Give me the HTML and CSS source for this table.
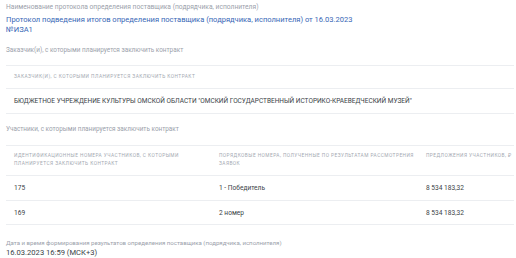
FILE: index.html
```html
<!DOCTYPE html>
<html lang="ru">
<head>
<meta charset="utf-8">
<link rel="stylesheet" href="styles.css">
</head>
<body>
<div class="page">
  <div class="label first">Наименование протокола определения поставщика (подрядчика, исполнителя)</div>
  <div class="title">Протокол подведения итогов определения поставщика (подрядчика, исполнителя) от 16.03.2023<br>№ИЗА1</div>

  <div class="label sec">Заказчик(и), с которыми планируется заключить контракт</div>
  <div class="table t1">
    <div class="row head"><div class="cell">Заказчик(и), с которыми планируется заключить контракт</div></div>
    <div class="row"><div class="cell">БЮДЖЕТНОЕ УЧРЕЖДЕНИЕ КУЛЬТУРЫ ОМСКОЙ ОБЛАСТИ "ОМСКИЙ ГОСУДАРСТВЕННЫЙ ИСТОРИКО-КРАЕВЕДЧЕСКИЙ МУЗЕЙ"</div></div>
  </div>

  <div class="label sec">Участники, с которыми планируется заключить контракт</div>
  <div class="table t2">
    <div class="row head grid3">
      <div class="cell">Идентификационные номера участников, с которыми планируется заключить контракт</div>
      <div class="cell">Порядковые номера, полученные по результатам рассмотрения заявок</div>
      <div class="cell">Предложения участников, ₽</div>
    </div>
    <div class="row grid3">
      <div class="cell">175</div>
      <div class="cell">1 - Победитель</div>
      <div class="cell">8 534 183,32</div>
    </div>
    <div class="row grid3">
      <div class="cell">169</div>
      <div class="cell">2 номер</div>
      <div class="cell">8 534 183,32</div>
    </div>
  </div>

  <div class="label date-label">Дата и время формирования результатов определения поставщика (подрядчика, исполнителя)</div>
  <div class="date">16.03.2023 16:59 (МСК+3)</div>
</div>
</body>
</html>
```
FILE: styles.css
```css
html, body {
  margin: 0;
  padding: 0;
  background: #ffffff;
}
body {
  font-family: Roboto, "Liberation Sans", sans-serif;
  color: #3a3f47;
}
.page {
  padding: 3px 2px 0 6px;
}
.label {
  font-size: 6.4px;
  line-height: 8px;
  color: #9ba1ab;
}
.label.first {
  font-size: 6.7px;
}
.title {
  margin-top: 4px;
  font-size: 7.55px;
  line-height: 10px;
  color: #3767b6;
}
.label.sec {
  margin-top: 11px;
}
.table {
  margin-top: 11px;
  border-top: 1px solid #eceef1;
}
.t2 {
  margin-top: 12px;
}
.row {
  border-bottom: 1px solid #eceef1;
  display: flex;
  align-items: center;
  height: 23px;
}
.t1 .head {
  height: 22px;
}
.t2 .head {
  height: 29px;
  align-items: start;
}
.t2 .head .cell {
  padding-top: 6px;
}
.grid3 {
  display: grid;
  grid-template-columns: 205px 207px 1fr;
  align-items: center;
}
.cell {
  padding-left: 8px;
  font-size: 6.6px;
  line-height: 8px;
}
.t1 .row:not(.head) .cell {
  font-size: 6.5px;
}
.head .cell {
  font-size: 4.8px;
  letter-spacing: 0.45px;
  text-transform: uppercase;
  color: #a4a9b2;
  line-height: 8px;
}
.t2 .head .cell:first-child {
  padding-right: 28px;
}
.row:not(.head) {
  height: 24px;
}
.t2 .row:last-child {
  height: 23px;
}
.date-label {
  margin-top: 14px;
  font-size: 6.1px;
}
.date {
  margin-top: 1px;
  font-size: 7.6px;
  line-height: 10px;
  color: #3a3f47;
}
```
